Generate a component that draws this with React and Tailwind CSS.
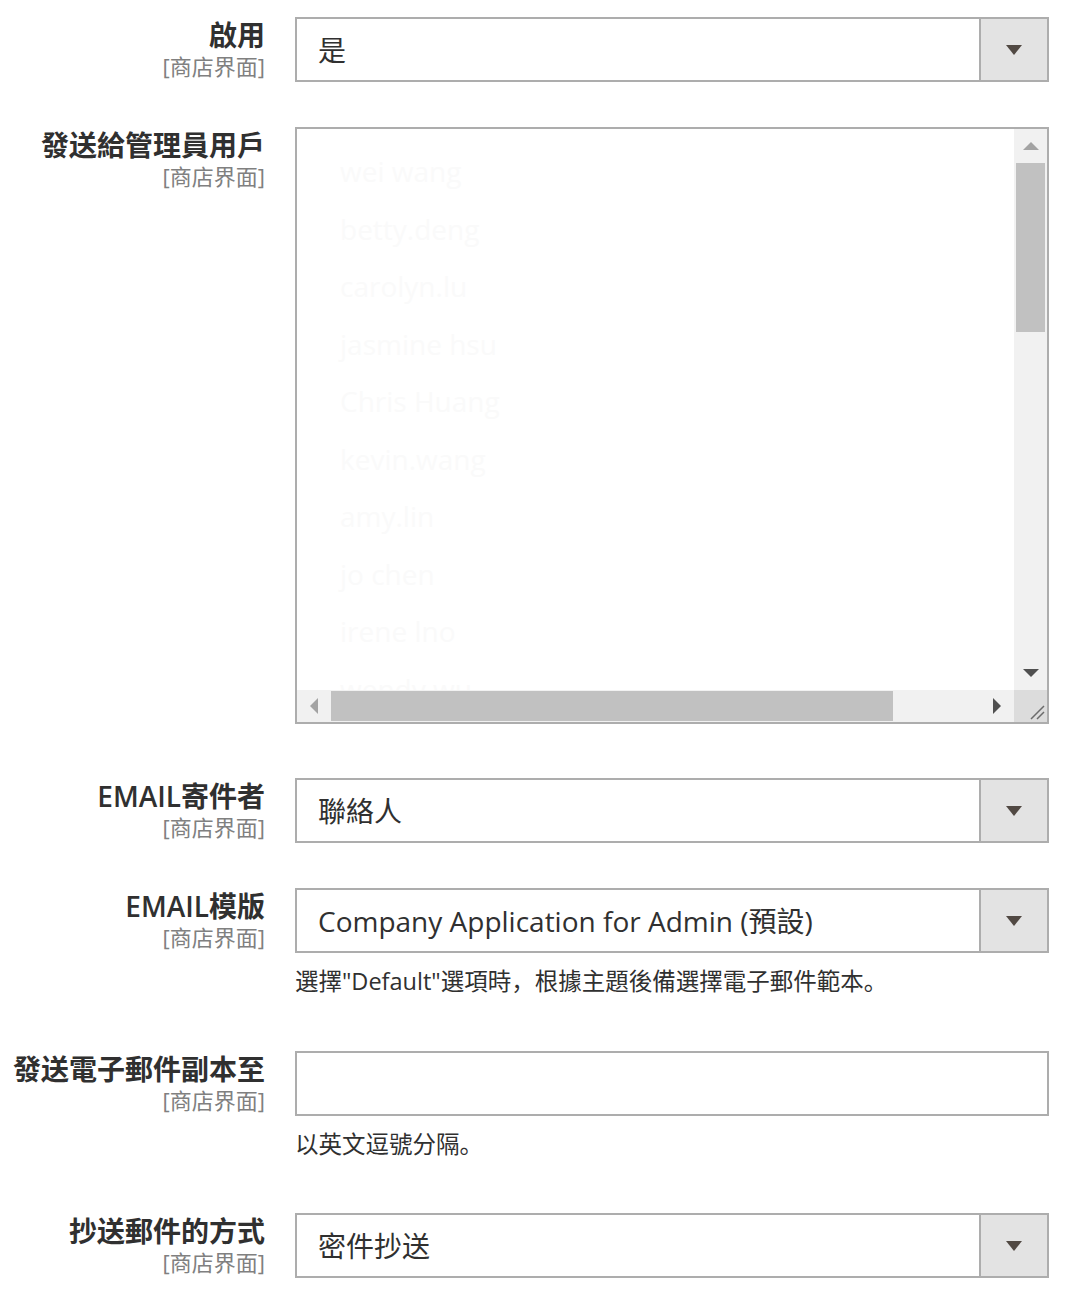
import React from "react"

const font = "font-['Open_Sans','Noto_Sans_CJK_SC',sans-serif]"

const admins = [
  "wei wang",
  "betty.deng",
  "carolyn.lu",
  "jasmine hsu",
  "Chris Huang",
  "kevin.wang",
  "amy.lin",
  "jo chen",
  "irene lno",
  "wendy wu",
]

function Label({ title }) {
  return (
    <div className="w-[265px] shrink-0 text-right">
      <div className="text-[28px] leading-[36px] font-semibold text-[#303030]">{title}</div>
      <div className="text-[22px] leading-[26px] text-[#808080]">[商店界面]</div>
    </div>
  )
}

function Select({ value }) {
  return (
    <div className="flex h-[65px] w-[754px] border-2 border-[#adadad] bg-white">
      <div className="flex flex-1 items-center pl-[21px] text-[28px] text-[#303030]">{value}</div>
      <div className="flex w-[68px] items-center justify-center border-l-2 border-[#adadad] bg-[#e3e3e3]">
        <div className="h-0 w-0 border-x-[8px] border-t-[10px] border-x-transparent border-t-[#514943]" />
      </div>
    </div>
  )
}

function Note({ children }) {
  return <p className="mt-[12px] text-[23.5px] leading-[32px] text-[#303030]">{children}</p>
}

function Row({ title, children, className = "" }) {
  return (
    <div className={"flex gap-[30px] " + className}>
      <Label title={title} />
      <div className="flex flex-col">{children}</div>
    </div>
  )
}

function MultiSelect() {
  return (
    <div className="grid h-[597px] w-[754px] grid-cols-[1fr_33px] grid-rows-[1fr_32px] border-2 border-[#adadad] bg-white">
      <div className="overflow-hidden pt-[14px] pl-[43px]">
        {admins.map((name) => (
          <div key={name} className="h-[57.5px] text-[28px] leading-[57.5px] whitespace-nowrap text-[#fafafa]">
            {name}
          </div>
        ))}
      </div>
      {/* vertical scrollbar */}
      <div className="flex flex-col bg-[#f1f1f1]">
        <div className="flex h-[34px] items-center justify-center">
          <div className="h-0 w-0 border-x-[8px] border-b-[8px] border-x-transparent border-b-[#a3a3a3]" />
        </div>
        <div className="mx-[2px] h-[169px] bg-[#c1c1c1]" />
        <div className="flex-1" />
        <div className="flex h-[34px] items-center justify-center">
          <div className="h-0 w-0 border-x-[8px] border-t-[8px] border-x-transparent border-t-[#505050]" />
        </div>
      </div>
      {/* horizontal scrollbar */}
      <div className="flex bg-[#f1f1f1]">
        <div className="flex w-[34px] items-center justify-center">
          <div className="h-0 w-0 border-y-[8px] border-r-[8px] border-y-transparent border-r-[#a3a3a3]" />
        </div>
        <div className="my-[1px] w-[562px] bg-[#c1c1c1]" />
        <div className="flex-1" />
        <div className="flex w-[34px] items-center justify-center">
          <div className="h-0 w-0 border-y-[8px] border-l-[8px] border-y-transparent border-l-[#505050]" />
        </div>
      </div>
      <div className="flex items-end justify-end bg-[#dcdcdc] p-[2px]">
        <svg width="16" height="16" viewBox="0 0 16 16">
          <path d="M2 15 L15 2 M8 15 L15 8" stroke="#6b6b6b" strokeWidth="1.5" />
        </svg>
      </div>
    </div>
  )
}

export default function App() {
  return (
    <div className={"min-h-[1298px] bg-white pt-[17px] " + font}>
      <Row title="啟用">
        <Select value="是" />
      </Row>
      <Row title="發送給管理員用戶" className="mt-[45px]">
        <MultiSelect />
      </Row>
      <Row title="EMAIL寄件者" className="mt-[54px]">
        <Select value="聯絡人" />
      </Row>
      <Row title="EMAIL模版" className="mt-[45px]">
        <Select value="Company Application for Admin (預設)" />
        <Note>選擇"Default"選項時，根據主題後備選擇電子郵件範本。</Note>
      </Row>
      <Row title="發送電子郵件副本至" className="mt-[54px]">
        <div className="h-[65px] w-[754px] border-2 border-[#adadad] bg-white" />
        <Note>以英文逗號分隔。</Note>
      </Row>
      <Row title="抄送郵件的方式" className="mt-[53px]">
        <Select value="密件抄送" />
      </Row>
    </div>
  )
}
